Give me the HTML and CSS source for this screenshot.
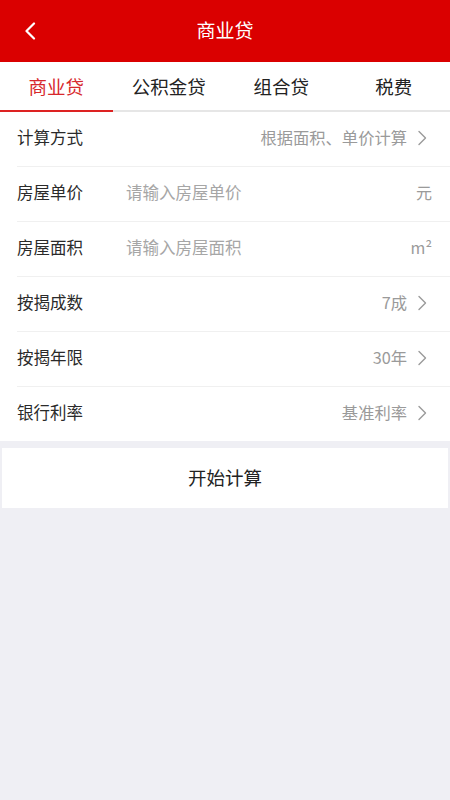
FILE: index.html
```html
<!DOCTYPE html>
<html lang="zh-CN">
<head>
<meta charset="utf-8">
<title>商业贷</title>
<link rel="stylesheet" href="styles.css">
</head>
<body>
<header class="topbar">
  <span class="back"><svg width="14" height="18" viewBox="0 0 14 18"><path d="M11 1.5 L3.5 9 L11 16.5" fill="none" stroke="#fff" stroke-width="2.2" stroke-linecap="round" stroke-linejoin="round"/></svg></span>
  <h1 class="title">商业贷</h1>
</header>
<nav class="tabs">
  <div class="tab active">商业贷</div>
  <div class="tab">公积金贷</div>
  <div class="tab">组合贷</div>
  <div class="tab">税费</div>
</nav>
<section class="form">
  <div class="row">
    <span class="label">计算方式</span>
    <span class="value">根据面积、单价计算</span>
    <span class="arrow"><svg width="10" height="16" viewBox="0 0 10 16"><path d="M2 1.5 L8.5 8 L2 14.5" fill="none" stroke="#9a9a9a" stroke-width="1.4" stroke-linecap="round" stroke-linejoin="round"/></svg></span>
  </div>
  <div class="row">
    <span class="label">房屋单价</span>
    <span class="placeholder">请输入房屋单价</span>
    <span class="unit">元</span>
  </div>
  <div class="row">
    <span class="label">房屋面积</span>
    <span class="placeholder">请输入房屋面积</span>
    <span class="unit">m²</span>
  </div>
  <div class="row">
    <span class="label">按揭成数</span>
    <span class="value">7成</span>
    <span class="arrow"><svg width="10" height="16" viewBox="0 0 10 16"><path d="M2 1.5 L8.5 8 L2 14.5" fill="none" stroke="#9a9a9a" stroke-width="1.4" stroke-linecap="round" stroke-linejoin="round"/></svg></span>
  </div>
  <div class="row">
    <span class="label">按揭年限</span>
    <span class="value">30年</span>
    <span class="arrow"><svg width="10" height="16" viewBox="0 0 10 16"><path d="M2 1.5 L8.5 8 L2 14.5" fill="none" stroke="#9a9a9a" stroke-width="1.4" stroke-linecap="round" stroke-linejoin="round"/></svg></span>
  </div>
  <div class="row">
    <span class="label">银行利率</span>
    <span class="value">基准利率</span>
    <span class="arrow"><svg width="10" height="16" viewBox="0 0 10 16"><path d="M2 1.5 L8.5 8 L2 14.5" fill="none" stroke="#9a9a9a" stroke-width="1.4" stroke-linecap="round" stroke-linejoin="round"/></svg></span>
  </div>
</section>
<div class="btn">开始计算</div>
</body>
</html>
```
FILE: styles.css
```css
* { box-sizing: border-box; }
html, body {
  margin: 0;
  padding: 0;
  background: #efeff4;
  font-family: "Noto Sans CJK SC", "Noto Sans", sans-serif;
  height: 100%;
}
.topbar {
  height: 62px;
  background: #da0000;
  display: flex;
  align-items: center;
  justify-content: center;
  position: relative;
}
.back {
  position: absolute;
  left: 23px;
  top: 22px;
  display: flex;
}
.title {
  margin: 0 0 4px 0;
  font-size: 19px;
  font-weight: normal;
  color: #fff;
  line-height: 1;
}
.tabs {
  display: flex;
  background: #fff;
  height: 50px;
  border-bottom: 2px solid #e6e6e6;
}
.tab {
  flex: 1;
  display: flex;
  align-items: center;
  justify-content: center;
  font-size: 18.5px;
  color: #222;
  margin-bottom: -2px;
  padding-bottom: 2px;
}
.tab.active {
  color: #d7282c;
  border-bottom: 2px solid #dd2222;
  padding-bottom: 0;
}
.form {
  background: #fff;
}
.row {
  height: 55px;
  margin-left: 17px;
  padding-right: 18px;
  padding-bottom: 4px;
  display: flex;
  align-items: center;
  border-bottom: 1px solid #f0f0f0;
}
.row:last-child {
  border-bottom: none;
  height: 54px;
}
.label {
  width: 109px;
  flex: none;
  font-size: 16.5px;
  color: #2a2a2a;
}
.placeholder {
  flex: 1;
  font-size: 16.5px;
  color: #a6a6a6;
}
.value {
  flex: 1;
  text-align: right;
  font-size: 16.3px;
  color: #9a9a9a;
}
.unit {
  font-size: 16px;
  color: #9a9a9a;
}
.arrow {
  display: flex;
  margin-left: 10px;
  margin-right: 5px;
  padding-top: 2px;
}
.btn {
  margin: 7px 2px 0;
  height: 60px;
  padding-bottom: 3px;
  background: #fff;
  display: flex;
  align-items: center;
  justify-content: center;
  font-size: 18.5px;
  color: #222;
}
```
